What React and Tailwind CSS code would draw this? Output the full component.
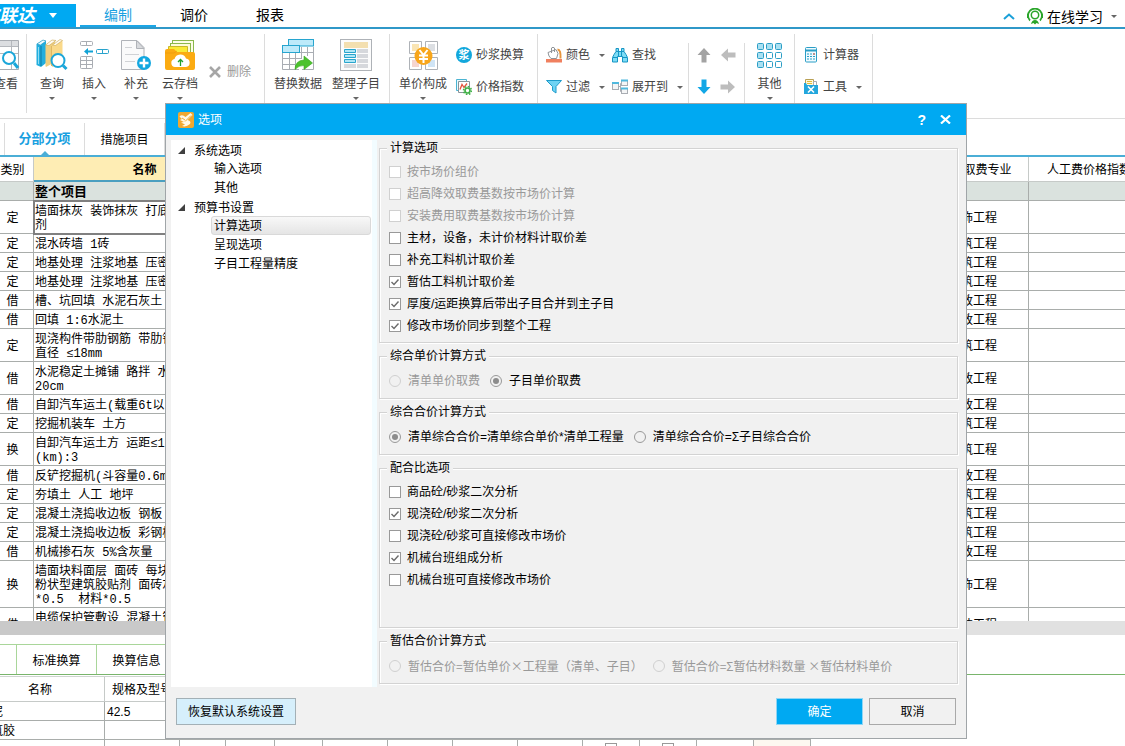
import React from 'react';

const QueryIcon = () => (
  <svg width="32" height="32" viewBox="0 0 32 32" fill="none">
    <path d="M.5 5 7 1l3 1v22l-5 4-4.500-2z" fill="#22aede" />
    <path d="M1 5 7 1l3 1-5.500 4z" fill="#f2fbfe" stroke="#1b93bd" strokeWidth=".6" />
    <path d="M5 7v20" stroke="#0d7ba3" />
    <path d="M2.500 8v17" stroke="#8edcf2" />
    <path d="M9.500 6 17 1.500h2V23l-9 5-.5-1z" fill="#efcf80" />
    <path d="M9.500 6 16 1l4 .5-7 5z" fill="#fffaf0" stroke="#caa650" strokeWidth=".6" />
    <path d="m16 6.500 10.500-5V24L16 28z" fill="#fad98a" />
    <path d="M16.500 6 24 .500l2.500 1-7 5z" fill="#fffaf0" stroke="#caa650" strokeWidth=".6" />
    <path d="M15.500 7v20" stroke="#e0b862" />
    <circle cx="22" cy="21.500" r="6.500" fill="#fff" stroke="#1ba6d9" strokeWidth="2" />
    <path d="m27 26.500 3.500 3.500" stroke="#1ba6d9" strokeWidth="3" />
  </svg>
);

const InsertIcon = () => (
  <svg width="32" height="32" viewBox="0 0 32 32" fill="none" stroke="#a9adb3" strokeWidth="1">
    <rect x="2.500" y="2.500" width="12" height="4" rx="1" />
    <path d="M8.500 2.500v4" />
    <rect x="2.500" y="17.500" width="12" height="12" rx="1" />
    <path d="M8.500 17.500v12M2.500 21.500h12M2.500 25.500h12" />
    <rect x="18.500" y="10.500" width="12" height="4" rx="1" stroke="#29a3cc" />
    <path d="M24.500 10.500v4" stroke="#29a3cc" />
    <path d="M6 12.500 10 9v2.500h5v2h-5V16z" fill="#12a3d6" stroke="none" />
  </svg>
);

const SupplementIcon = () => (
  <svg width="32" height="32" viewBox="0 0 32 32" fill="none">
    <path d="M1.500 1.500H17l7 7v22H1.500z" fill="#fafafa" stroke="#b0b3b8" />
    <path d="M16.500 1.500v8H24z" fill="#d8dadd" stroke="#b0b3b8" />
    <path d="M5 8.500h7M5 15.500h14M5 22.500h10" stroke="#d0d2d5" />
    <circle cx="24" cy="24" r="7" fill="#12a7e0" />
    <path d="M24 19.500v9M19.500 24h9" stroke="#fff" strokeWidth="2.400" />
  </svg>
);

const CloudIcon = () => (
  <svg width="32" height="32" viewBox="0 0 32 32" fill="none">
    <rect x="8.500" y="1.500" width="21" height="14" fill="#fdfde8" stroke="#8bb84c" />
    <rect x="6.500" y="4.500" width="20" height="12" fill="#fdfbd8" stroke="#8bb84c" />
    <path d="M4.500 7.500h19v10h-19z" fill="#f9ea35" stroke="#c9b82a" />
    <path d="M1 12q0-2 2-2h7l3 3h16q2 0 2 2v14q0 2-2 2H3q-2 0-2-2z" fill="#fbab12" />
    <path d="M1 14h9l3-2" stroke="#e8930a" strokeWidth=".6" />
    <path d="M11 28a4 4 0 0 1-.500-7.900 6 6 0 0 1 11.500-.600A4.300 4.300 0 0 1 22 28z" fill="#fff" />
    <path d="M16.500 27v-6M14 23l2.500-2.500L19 23" stroke="#23a02e" strokeWidth="1.300" />
  </svg>
);

const ReplaceIcon = () => (
  <svg width="32" height="32" viewBox="0 0 32 32" fill="none">
    <path d="M.5 13v17.500H17M7.500 13v17.500M13.500 13v17.500M.5 19.500h19M.5 25.500h14M19.500 8v12M25.500 8v9M31.500 8v18M17 13.500h14M20 30.500h11.500v-6" stroke="#a9adb3" />
    <rect x="6.500" y=".5" width="25" height="6.500" fill="#bdeafa" stroke="#27a5cf" />
    <rect x=".5" y="6.500" width="17" height="7" fill="#bdeafa" stroke="#27a5cf" />
    <path d="M13 30.500q0-9 9-9.500v-4l8.500 7-8.500 6.500v-4q-5-.5-9 4z" fill="#4cc22e" stroke="#35a51c" strokeWidth=".6" />
  </svg>
);

const ArrangeIcon = () => (
  <svg width="32" height="32" viewBox="0 0 32 32" fill="none">
    <rect x=".5" y=".5" width="31" height="31" fill="#fcfcfc" stroke="#aeb2b7" />
    <path d="M4 3h24v6H4z" fill="#f3dfb0" />
    <path d="M4.500 10.500h11v3h-11zM4.500 15.500h11v3h-11zM4.500 20.500h11v3h-11z" fill="#aee6f6" stroke="#2aa5cd" />
    <path d="M17 10h11v4H17zM17 15h11v4H17zM17 20h11v4H17zM17 25h11v4H17zM4 25h12v4H4z" fill="#d6d8dc" />
  </svg>
);

const PriceIcon = () => (
  <svg width="32" height="32" viewBox="0 0 32 32" fill="none">
    <path d="M2.500 2.500h12v12h-12zM18.500 2.500h12v12h-12zM2.500 18.500h12v12h-12zM18.500 18.500h12v12h-12z" fill="#fff" stroke="#aeb2b7" />
    <path d="M5 5h7v7H5z" fill="#fae5b4" />
    <path d="M21 5h7v7h-7z" fill="#dcdfe3" />
    <path d="M5 21h7v7H5z" fill="#f6d5cf" />
    <path d="M21 21h7v7h-7z" fill="#cfe4f5" />
    <circle cx="16.500" cy="17" r="9" fill="#f8a61b" />
    <path d="m12.500 11 4 5 4-5M16.500 16v8M12 16.500h9M12 20h9" stroke="#fff" strokeWidth="2" />
  </svg>
);

const ViewIcon = () => (
  <svg width="32" height="32" viewBox="0 0 32 32" fill="none">
    <path d="M6.500 1.500h22v29h-22z" fill="#fff" stroke="#a9adb3" />
    <path d="M7 2h21v5H7z" fill="#dcdee1" />
    <path d="M7 7.500h21M7 14.500h21M21.500 2v28" stroke="#b5b8bd" />
    <circle cx="19" cy="19" r="6" fill="#fff" stroke="#1ba6d9" strokeWidth="2" />
    <path d="m24 24 4 5" stroke="#1ba6d9" strokeWidth="3" />
  </svg>
);

const OtherIcon = () => (
  <svg width="32" height="32" viewBox="0 0 32 32" stroke="#2b9ec6">
    {[4, 13, 22].map((y, r) =>
      [3, 12, 21].map((x, c) => (
        <rect key={`${x}-${y}`} x={x + 0.5} y={y + 0.5} width="6" height="6" rx="1" fill={r > 0 && c > 0 ? '#fff' : '#a9e0f2'} />
      ))
    )}
  </svg>
);

const MortarIcon = () => (
  <svg width="16" height="16" viewBox="0 0 16 16">
    <circle cx="8" cy="8" r="8" fill="#12a7dc" />
    <text x="8" y="12" textAnchor="middle" fontSize="11" fontWeight="bold" fill="#fff" fontFamily="Noto Sans CJK SC, sans-serif">浆</text>
  </svg>
);

const IndexIcon = () => (
  <svg width="16" height="16" viewBox="0 0 16 16" fill="none">
    <path d="M.5.5h10v11H.5z" fill="#eafaff" stroke="#4bb4d2" />
    <path d="M2.500 2.500h11v11h-11z" fill="#fff" stroke="#8a9499" />
    <path d="M4 10.500 6 5.500l2 3 3-4" stroke="#e5533c" strokeWidth="1.300" />
    <circle cx="11.500" cy="11.500" r="4" stroke="#43b14a" strokeWidth="1.500" strokeDasharray="1.600 1.500" />
    <circle cx="11.500" cy="11.500" r="2.500" fill="#fff" stroke="#43b14a" strokeWidth="1.700" />
  </svg>
);

const ColorIcon = () => (
  <svg width="16" height="16" viewBox="0 0 16 16" fill="none">
    <path d="M0 12h16v3.500H0z" fill="#f0805f" />
    <path d="M11.500 2.500q3.500 0 3 9" stroke="#e8963d" strokeWidth="2" />
    <path d="m2 5.500 8-3 2 4-1.500 5H5l-2-2.500z" fill="#fff" stroke="#8f9499" />
    <path d="M5.500 6V1Q7-.500 8.500 1v4" stroke="#8f9499" />
  </svg>
);

const FindIcon = () => (
  <svg width="16" height="16" viewBox="0 0 16 16" fill="#7ddcf5" stroke="#1795c4">
    <path d="M4 1.500h2.500v3h3v-3H12v3l2 3 1.500 3v4.500h-5V9.500h-5V15h-5v-4.500L2 7.500l2-3z" strokeLinejoin="round" />
    <path d="M1 10.500h4.500M10.500 10.500H15M6.500 4.500v5M9.500 4.500v5M4 4.500h8" fill="none" />
  </svg>
);

const FilterIcon = () => (
  <svg width="16" height="16" viewBox="0 0 16 16">
    <path d="M.5 1.500h15L10 7.500V14L6.500 11.500v-4z" fill="#6fd3f3" stroke="#1f9ccb" strokeLinejoin="round" />
  </svg>
);

const ExpandIcon = () => (
  <svg width="16" height="16" viewBox="0 0 16 16" fill="#f4f5f6" stroke="#a9adb3">
    <path d="M6 7.500h2.500M8.500 4.500v8M8.500 4.500H10M8.500 12.500H10" fill="none" />
    <rect x=".5" y="3.500" width="6" height="7" />
    <rect x="9.500" y="1.500" width="6" height="5" />
    <rect x="9.500" y="9.500" width="6" height="5" />
    <path d="M0 4h7M9 1.500h7M9 9.500h7" stroke="#4fb8dd" strokeWidth="2" />
  </svg>
);

const CalculatorIcon = () => (
  <svg width="16" height="16" viewBox="0 0 16 16" fill="none">
    <rect x="2.500" y=".5" width="11" height="14.500" rx="1" fill="#f1fbff" stroke="#2b9ec6" />
    <path d="M3 3.500h10" stroke="#2b9ec6" strokeWidth="2" />
    <path d="M4 7h8M4 9.500h8M4 12h8" stroke="#2b9ec6" strokeDasharray="2 1" />
    <path d="M10 7h2" stroke="#e5533c" />
  </svg>
);

const ToolIcon = () => (
  <svg width="16" height="16" viewBox="0 0 16 16" fill="none">
    <path d="M2.500.5h8v7h-8z" fill="#fff8d8" stroke="#b9a055" />
    <path d="M10.500 2.500h3v5h-3z" fill="#fff" stroke="#a9adb3" />
    <path d="M4 2.500h5M4 4.500h5" stroke="#e3b93d" />
    <path d="M1 4h2l1 2h11v9H1z" fill="#23a7dd" />
    <path d="m5 7.500 6 6M11 7.500l-6 6" stroke="#fff" strokeWidth="1.600" />
  </svg>
);

const Arrow = ({ rotate, color }) => (
  <svg width="16" height="16" viewBox="0 0 16 16" className={rotate}>
    <path d="M8 1 14.500 8H10.500v7.500h-5V8H1.500z" fill={color} />
  </svg>
);

const Caret = ({ className = 'text-[#666]' }) => (
  <svg width="6" height="3" viewBox="0 0 6 3" className={`shrink-0 ${className}`}>
    <path d="M0 0h6L3 3z" fill="currentColor" />
  </svg>
);

const BigButton = ({ icon, label, width = 'w-[42px]', caret = true }) => (
  <button className={`${width} flex flex-col items-center pt-[5px] shrink-0 whitespace-nowrap`}>
    {icon}
    <span className="mt-[3px] leading-5">{label}</span>
    {caret && <span className="flex pt-[3px]"><Caret /></span>}
  </button>
);

const SmallButton = ({ icon, label, caret }) => (
  <button className="flex items-center gap-1 h-4 whitespace-nowrap leading-4">
    {icon}
    <span>{label}</span>
    {caret && <span className="ml-[5px] flex"><Caret /></span>}
  </button>
);

const SmallColumn = ({ children, className = '' }) => (
  <div className={`flex flex-col gap-4 pt-[13px] ${className}`}>{children}</div>
);

const Ribbon = () => (
  <div className="h-[90px] shrink-0 flex items-start border-b border-[#dcdcdc] pt-[5px] text-xs text-[#444]">
    <div className="w-[27px] h-[79px] flex justify-end pr-[4px] border-r border-[#dcdcdc]">
      <BigButton icon={<ViewIcon />} label="查看" caret={false} width="w-8" />
    </div>
    <div className="w-[238px] h-[79px] flex pl-1 border-r border-[#dcdcdc]">
      <BigButton icon={<QueryIcon />} label="查询" />
      <BigButton icon={<InsertIcon />} label="插入" />
      <BigButton icon={<SupplementIcon />} label="补充" />
      <BigButton icon={<CloudIcon />} label="云存档" width="w-[46px]" />
      <button className="flex items-center gap-1.5 h-4 mt-[30px] ml-1.5 text-[#999] whitespace-nowrap">
        <svg width="12" height="12" viewBox="0 0 12 12"><path d="m1 1 10 10M11 1 1 11" stroke="#a6a6a6" strokeWidth="2.600" /></svg>
        删除
      </button>
    </div>
    <div className="w-[125px] h-[79px] flex pl-1 border-r border-[#dcdcdc]">
      <BigButton icon={<ReplaceIcon />} label="替换数据" width="w-[58px]" caret={false} />
      <BigButton icon={<ArrangeIcon />} label="整理子目" width="w-[58px]" />
    </div>
    <div className="w-[148px] h-[79px] flex pl-1 border-r border-[#dcdcdc]">
      <BigButton icon={<PriceIcon />} label="单价构成" width="w-[58px]" />
      <SmallColumn className="pl-1">
        <SmallButton icon={<MortarIcon />} label="砂浆换算" />
        <SmallButton icon={<IndexIcon />} label="价格指数" />
      </SmallColumn>
    </div>
    <div className="w-[150px] h-[79px] flex pl-2">
      <SmallColumn className="w-[66px]">
        <SmallButton icon={<ColorIcon />} label="颜色" caret />
        <SmallButton icon={<FilterIcon />} label="过滤" caret />
      </SmallColumn>
      <SmallColumn>
        <SmallButton icon={<FindIcon />} label="查找" />
        <SmallButton icon={<ExpandIcon />} label="展开到" caret />
      </SmallColumn>
    </div>
    <div className="w-[57px] h-[70px] mt-[9px] grid grid-cols-2 gap-y-4 content-start pt-[4px] pl-[7px] border-x border-[#dcdcdc]">
      <button aria-label="上移"><Arrow rotate="rotate-0" color="#a3a3a3" /></button>
      <button aria-label="左移"><Arrow rotate="-rotate-90" color="#bdbdbd" /></button>
      <button aria-label="下移"><Arrow rotate="rotate-180" color="#12a7e6" /></button>
      <button aria-label="右移"><Arrow rotate="rotate-90" color="#bdbdbd" /></button>
    </div>
    <div className="w-[50px] h-[79px] flex justify-center border-r border-[#dcdcdc]">
      <BigButton icon={<OtherIcon />} label="其他" />
    </div>
    <div className="w-[78px] h-[79px] flex pl-2 border-r border-[#dcdcdc]">
      <SmallColumn>
        <SmallButton icon={<CalculatorIcon />} label="计算器" />
        <SmallButton icon={<ToolIcon />} label="工具" caret />
      </SmallColumn>
    </div>
  </div>
);

const MenuBar = () => (
  <header className="h-[29px] shrink-0 flex items-end border-b-2 border-[#2f98c8] text-sm">
    <div className="w-[76px] h-[23px] bg-[#00a9f2] overflow-hidden flex items-center shrink-0">
      <button className="-ml-[19px] flex items-center gap-3.5 text-white whitespace-nowrap">
        <span className="text-lg leading-5 font-bold italic">广联达</span>
        <svg width="8" height="5" viewBox="0 0 8 5"><path d="M0 0h8L4 5z" fill="#fff" /></svg>
      </button>
    </div>
    <nav className="flex ml-1 leading-[22px]">
      <a href="#edit" className="w-[76px] h-[23px] text-center text-[#18a0e0] border-b-2 border-[#1ba6e6]">编制</a>
      <a href="#price" className="w-[76px] h-[23px] text-center">调价</a>
      <a href="#report" className="w-[76px] h-[23px] text-center">报表</a>
    </nav>
    <div className="ml-auto flex items-center h-[22px] pr-2">
      <svg width="12" height="7" viewBox="0 0 12 7" fill="none" className="mr-3"><path d="m1 6 5-4.500L11 6" stroke="#1ba0d8" strokeWidth="2" /></svg>
      <button className="flex items-center gap-1 leading-5">
        <svg width="16" height="17" viewBox="0 0 16 17" fill="none" stroke="#2aa52a">
          <path d="M3 12.500a7 7 0 1 1 10 0" strokeWidth="1.800" />
          <circle cx="8" cy="7" r="3.700" strokeWidth="1.500" />
          <path d="M1 6v4M15 6v4" strokeWidth="2" />
          <path d="M4 16q1-4 4-4t4 4l-2.500-1L8 16.500 6.500 15z" fill="#2aa52a" stroke="none" />
        </svg>
        <span className="pt-0.5">在线学习</span>
        <span className="ml-1 flex"><Caret /></span>
      </button>
    </div>
  </header>
);

const ProjectTabs = () => (
  <nav className="h-[38px] shrink-0 flex items-end border-b-2 border-[#4baed6] text-xs">
    <div className="w-[5px] h-8 border-r border-[#dcdcdc]" />
    <a href="#items" className="relative w-20 h-8 flex items-center justify-center text-[13px] font-bold text-[#18a0e0] border-r border-[#dcdcdc]">
      分部分项
      <svg width="8" height="4" viewBox="0 0 8 4" className="absolute bottom-0 left-9"><path d="M0 4h8L4 0z" fill="#4baed6" /></svg>
    </a>
    <a href="#measures" className="w-20 h-8 flex items-center justify-center pt-px border-r border-[#dcdcdc]">措施项目</a>
  </nav>
);

const ROWS = [
  { type: '定', name: '墙面抹灰 装饰抹灰 打底\n剂', major: '装饰工程', height: 'h-[33px]', active: true },
  { type: '定', name: '混水砖墙 1砖', major: '建筑工程', height: 'h-[19px]' },
  { type: '定', name: '地基处理 注浆地基 压密注浆', major: '建筑工程', height: 'h-[19px]' },
  { type: '定', name: '地基处理 注浆地基 压密注浆', major: '建筑工程', height: 'h-[19px]' },
  { type: '借', name: '槽、坑回填 水泥石灰土', major: '市政工程', height: 'h-[19px]' },
  { type: '借', name: '回填 1:6水泥土', major: '市政工程', height: 'h-[19px]' },
  { type: '定', name: '现浇构件带肋钢筋 带肋钢筋\n直径 ≤18mm', major: '建筑工程', height: 'h-[33px]' },
  { type: '借', name: '水泥稳定土摊铺 路拌 水泥\n20cm', major: '市政工程', height: 'h-[33px]' },
  { type: '借', name: '自卸汽车运土(载重6t以内)', major: '市政工程', height: 'h-[19px]' },
  { type: '定', name: '挖掘机装车 土方', major: '建筑工程', height: 'h-[19px]' },
  { type: '换', name: '自卸汽车运土方 运距≤1km\n(km):3', major: '建筑工程', height: 'h-[33px]' },
  { type: '借', name: '反铲挖掘机(斗容量0.6m3)', major: '市政工程', height: 'h-[19px]' },
  { type: '定', name: '夯填土 人工 地坪', major: '建筑工程', height: 'h-[19px]' },
  { type: '定', name: '混凝土浇捣收边板 钢板', major: '建筑工程', height: 'h-[19px]' },
  { type: '定', name: '混凝土浇捣收边板 彩钢板', major: '建筑工程', height: 'h-[19px]' },
  { type: '借', name: '机械掺石灰 5%含灰量', major: '市政工程', height: 'h-[19px]' },
  { type: '换', name: '墙面块料面层 面砖 每块\n粉状型建筑胶贴剂 面砖灰缝\n*0.5  材料*0.5', major: '装饰工程', height: 'h-[47px]' },
  { type: '借', name: '电缆保护管敷设 混凝土管\n管径', major: '安装工程', height: 'h-[33px]' },
];

const CostTable = () => (
  <div className="flex-1 min-h-0 overflow-hidden">
    <table className="-ml-2 w-[calc(100%+32px)] table-fixed border-separate border-spacing-0 text-xs leading-[14px] font-['Liberation_Mono','Noto_Sans_CJK_SC',monospace]">
      <colgroup>
        <col className="w-[42px]" />
        <col className="w-[221px]" />
        <col />
        <col className="w-[82px]" />
        <col className="w-[120px]" />
      </colgroup>
      <thead>
        <tr className="h-[25px]">
          <th className="p-0 pt-1 font-normal border-r border-b border-[#c6cac8]">类别</th>
          <th className="p-0 pt-1 bg-[#feedb4] border-b-2 border-[#4b9fc0]">名称</th>
          <th className="p-0 border-r border-b border-[#c6cac8]" />
          <th className="p-0 pt-1 font-normal border-r border-b border-[#c6cac8]">取费专业</th>
          <th className="p-0 pt-1 font-normal border-b border-[#c6cac8]">人工费价格指数</th>
        </tr>
      </thead>
      <tbody>
        <tr className="h-[19px] bg-[#dae2de]">
          <td className="p-0 border-r border-b border-[#a9adab]" />
          <td className="p-0 pt-[3px] pl-px font-bold text-[13px] border-r border-b border-[#a9adab]">整个项目</td>
          <td className="p-0 border-r border-b border-[#a9adab]" />
          <td className="p-0 border-r border-b border-[#a9adab]" />
          <td className="p-0 border-b border-[#a9adab]" />
        </tr>
        {ROWS.map((row, i) => (
          <tr key={i} className={row.height}>
            <td className="p-0 pt-[3px] text-center border-r border-b border-[#a9adab]">{row.type}</td>
            <td className={`p-0 pt-[3px] pl-px whitespace-pre border-r border-b border-[#a9adab] ${row.active ? 'outline-2 -outline-offset-1 outline-[#808080]' : ''}`}>
              {row.name}
            </td>
            <td className="p-0 border-r border-b border-[#a9adab]" />
            <td className="p-0 pt-[3px] pl-0.5 border-r border-b border-[#a9adab]">{row.major}</td>
            <td className="p-0 border-b border-[#a9adab]" />
          </tr>
        ))}
      </tbody>
    </table>
  </div>
);

const MATERIALS = [
  { name: '水泥', spec: '42.5' },
  { name: '建筑胶', spec: '' },
  { name: '', spec: '', flags: true },
];

const DetailPanel = () => (
  <section className="h-[125px] shrink-0 overflow-hidden text-xs">
    <div className="h-[14px] flex">
      <div className="w-[560px] bg-[#c9c9c9]" />
      <div className="flex-1 bg-[#e1e1e1]" />
    </div>
    <nav className="mt-[9px] h-[31px] flex border-b border-[#79b56c]">
      <div className="w-[17px] border-t border-r border-[#a9d69a]" />
      <a href="#convert" className="w-20 flex items-center justify-center pt-0.5 border-t border-r border-[#a9d69a]">标准换算</a>
      <a href="#info" className="w-20 flex items-center justify-center pt-0.5 border-t border-r border-[#a9d69a]">换算信息</a>
    </nav>
    <table className="mt-px -ml-6 w-[835px] table-fixed border-separate border-spacing-0 border-t border-[#cfd3d1]">
      <colgroup>
        <col className="w-[129px]" />
        <col className="w-[75px]" />
        <col className="w-[46px]" />
        <col className="w-[49px]" />
        <col className="w-[48px]" />
        <col className="w-[65px]" />
        <col className="w-[65px]" />
        <col className="w-[65px]" />
        <col className="w-[65px]" />
        <col className="w-[57px]" />
        <col className="w-[57px]" />
        <col className="w-[57px]" />
        <col className="w-[57px]" />
      </colgroup>
      <thead>
        <tr className="h-[25px]">
          <th className="p-0 pt-0.5 font-normal border-r border-b border-[#c6cac8]">名称</th>
          <th className="p-0 pt-0.5 font-normal border-r border-b border-[#c6cac8] whitespace-nowrap">规格及型号</th>
          {Array.from({ length: 11 }, (_, i) => <th key={i} className="border-r border-b border-[#c6cac8]" />)}
        </tr>
      </thead>
      <tbody>
        {MATERIALS.map((m, i) => (
          <tr key={i} className="h-[19px]">
            <td className="p-0 pt-0.5 pl-[3px] leading-4 border-r border-b border-[#a9adab]">{m.name}</td>
            <td className="p-0 pt-0.5 pl-0.5 leading-4 border-r border-b border-[#a9adab]">{m.spec}</td>
            {Array.from({ length: 11 }, (_, c) => (
              <td key={c} className={`p-0 border-r border-b border-[#a9adab] ${m.flags && c === 10 ? 'bg-[#fdf8f0]' : ''}`}>
                {m.flags && (c === 7 || c === 8) && (
                  <input type="checkbox" aria-label="标记" className="block mx-auto appearance-none size-3 border border-[#999] bg-white" />
                )}
              </td>
            ))}
          </tr>
        ))}
      </tbody>
    </table>
  </section>
);

const Check = ({ label, checked, disabled }) => (
  <label className={`flex items-center gap-1.5 h-[22px] ${disabled ? 'text-[#999]' : 'text-black'}`}>
    <span className="relative size-3">
      <input
        type="checkbox"
        defaultChecked={checked}
        disabled={disabled}
        className="peer block appearance-none size-3 bg-white border border-[#999] disabled:border-[#d0d0d0]"
      />
      <svg viewBox="0 0 12 12" className="absolute inset-0 size-3 hidden peer-checked:block pointer-events-none" fill="none">
        <path d="m2.500 6 2.500 2.500L9.500 3.500" stroke="#6b6b6b" strokeWidth="1.400" />
      </svg>
    </span>
    {label}
  </label>
);

const Radio = ({ name, label, checked, disabled, wide }) => (
  <label className={`flex items-center gap-[7px] h-[22px] whitespace-nowrap ${disabled ? 'text-[#999]' : 'text-black'} ${wide ? "font-['Noto_Sans_CJK_SC',sans-serif]" : ''}`}>
    <input
      type="radio"
      name={name}
      defaultChecked={checked}
      disabled={disabled}
      className="appearance-none size-3 rounded-full border border-[#999] disabled:border-[#d0d0d0] flex items-center justify-center checked:before:block checked:before:size-1.5 checked:before:rounded-full checked:before:bg-[#8c8c8c]"
    />
    {label}
  </label>
);

const Group = ({ title, className = '', children }) => (
  <fieldset className={`border border-[#d3d3d3] px-[9px] shadow-[1px_1px_0_#fff,inset_1px_1px_0_#fff] ${className}`}>
    <legend className="-ml-[2px] px-[3px] leading-4 bg-[#f1f1f1]">{title}</legend>
    {children}
  </fieldset>
);

const TREE = [
  { label: '系统选项', children: ['输入选项', '其他'] },
  { label: '预算书设置', children: ['计算选项', '呈现选项', '子目工程量精度'] },
];

const OptionTree = () => (
  <nav className="w-[206px] shrink-0 bg-white border-r-[5px] border-[#f2fcff]">
    {TREE.map(node => (
      <div key={node.label}>
        <button className="flex items-center h-[19px] pt-0.5 pl-[7px] leading-4">
          <svg width="7" height="7" viewBox="0 0 7 7" className="mr-[9px]"><path d="M7 0v7H0z" fill="#404040" /></svg>
          {node.label}
        </button>
        {node.children.map(child => (
          <button
            key={child}
            className={`flex items-center ml-10 w-40 h-[19px] pt-px pl-[2px] leading-4 rounded-[3px] border ${
              child === '计算选项' ? 'border-[#d9d9d9] bg-linear-to-b from-[#f8f8f8] to-[#e5e5e5]' : 'border-transparent'
            }`}
          >
            {child}
          </button>
        ))}
      </div>
    ))}
  </nav>
);

const OptionsDialog = () => (
  <div role="dialog" aria-label="选项" className="absolute left-[165px] top-[103px] w-[802px] h-[636px] flex flex-col bg-[#f1f1f1] border border-[#a0a5a8] text-xs">
    <div className="h-[31px] shrink-0 flex items-center bg-[#00a9f2] text-white pl-3 pr-[15px]">
      <svg width="16" height="16" viewBox="0 0 16 16" fill="none">
        <rect width="16" height="16" rx="2" fill="#f0a830" />
        <path d="M1.500 4.500Q4 2 7.500 5l5-4 2 2-5 5q4 1 2.500 4-4 3.500-8 2l3-1.500-4-2L6 10 2 8l2-1z" fill="#fff8e6" />
        <path d="m7 9.500 6-6M4 6l3 2" stroke="#f0a830" />
      </svg>
      <span className="ml-1 leading-4">选项</span>
      <button className="ml-auto text-sm leading-5 font-bold">?</button>
      <button aria-label="关闭" className="ml-3.5">
        <svg width="11" height="9" viewBox="0 0 11 9"><path d="m1 .5 9 8M10 .5l-9 8" stroke="#fff" strokeWidth="2.200" /></svg>
      </button>
    </div>
    <div className="flex-1 min-h-0 flex pt-[5px] pl-[5px]">
      <OptionTree />
      <div className="flex-1 flex flex-col gap-[5px] pl-0.5 pr-2 pb-[3px]">
        <Group title="计算选项" className="py-[5px]">
          <Check label="按市场价组价" disabled />
          <Check label="超高降效取费基数按市场价计算" disabled />
          <Check label="安装费用取费基数按市场价计算" disabled />
          <Check label="主材，设备，未计价材料计取价差" />
          <Check label="补充工料机计取价差" />
          <Check label="暂估工料机计取价差" checked />
          <Check label="厚度/运距换算后带出子目合并到主子目" checked />
          <Check label="修改市场价同步到整个工程" checked />
        </Group>
        <Group title="综合单价计算方式" className="py-1.5">
          <div className="flex gap-2.5">
            <Radio name="unit" label="清单单价取费" disabled />
            <Radio name="unit" label="子目单价取费" checked />
          </div>
        </Group>
        <Group title="综合合价计算方式" className="py-1.5">
          <div className="flex gap-2.5">
            <Radio name="total" label="清单综合合价=清单综合单价*清单工程量" checked />
            <Radio name="total" label="清单综合合价=Σ子目综合合价" />
          </div>
        </Group>
        <Group title="配合比选项" className="flex-1 py-[5px]">
          <Check label="商品砼/砂浆二次分析" />
          <Check label="现浇砼/砂浆二次分析" checked />
          <Check label="现浇砼/砂浆可直接修改市场价" />
          <Check label="机械台班组成分析" checked />
          <Check label="机械台班可直接修改市场价" />
        </Group>
        <Group title="暂估合价计算方式" className="py-1.5">
          <div className="flex gap-2.5">
            <Radio name="estimate" label="暂估合价=暂估单价×工程量（清单、子目）" disabled wide />
            <Radio name="estimate" label="暂估合价=Σ暂估材料数量 ×暂估材料单价" disabled wide />
          </div>
        </Group>
      </div>
    </div>
    <div className="h-[51px] shrink-0 flex items-start gap-1.5 pt-[11px] pl-2.5 pr-2.5">
      <button className="w-[120px] h-[27px] mr-auto bg-[#d6effb] border border-[#a3b0b6]">恢复默认系统设置</button>
      <button className="w-[87px] h-[27px] bg-[#00a9f2] border border-[#8fd6f5] text-white">确定</button>
      <button className="w-[87px] h-[27px] bg-[#f1f1f1] border border-[#a9a9a9]">取消</button>
    </div>
  </div>
);

const App = () => (
  <div className="relative h-screen overflow-hidden flex flex-col bg-white text-black font-['Liberation_Sans','Noto_Sans_CJK_SC',sans-serif]">
    <MenuBar />
    <Ribbon />
    <ProjectTabs />
    <CostTable />
    <DetailPanel />
    <OptionsDialog />
  </div>
);

export default App;
